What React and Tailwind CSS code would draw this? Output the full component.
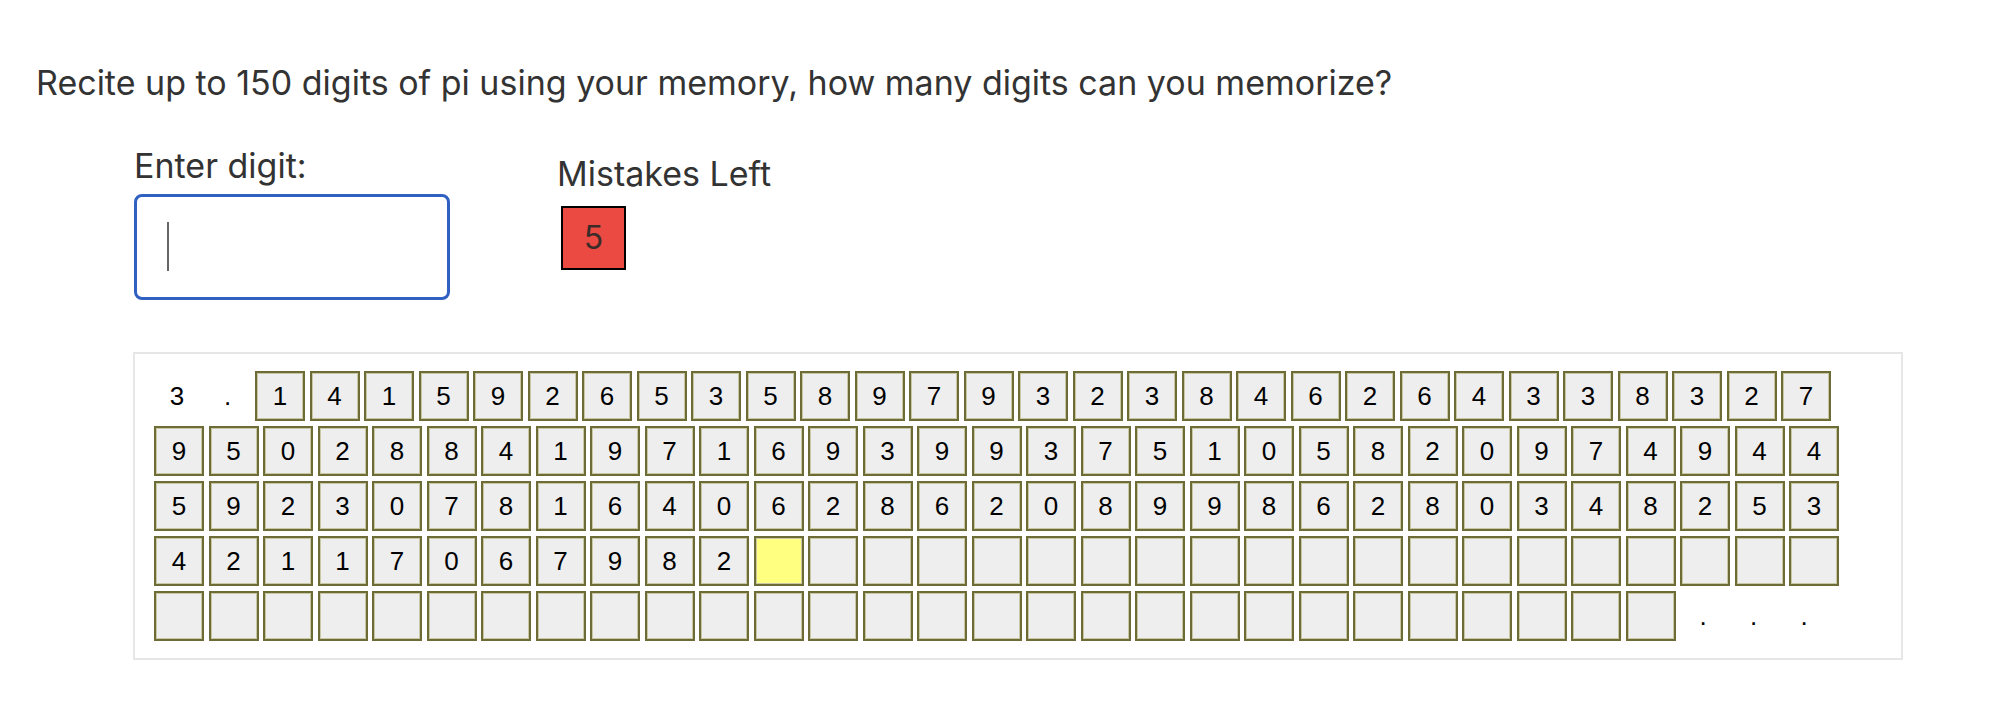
import React from 'react';

const PI =
  '141592653589793238462643383279502884197169399375105820974944592307816406286208998628034825342117067982';

function buildRows() {
  const filled = PI.split('');
  const cells = [];
  cells.push({ kind: 'plain', text: '3' });
  cells.push({ kind: 'plain', text: '.' });
  for (let i = 0; i < 150; i++) {
    if (i < filled.length) cells.push({ kind: 'digit', text: filled[i] });
    else if (i === filled.length) cells.push({ kind: 'current', text: '' });
    else cells.push({ kind: 'empty', text: '' });
  }
  cells.push({ kind: 'plain', text: '.' });
  cells.push({ kind: 'plain', text: '.' });
  cells.push({ kind: 'plain', text: '.' });

  const rows = [];
  for (let i = 0; i < cells.length; i += 31) rows.push(cells.slice(i, i + 31));
  return rows;
}

function Cell({ cell }) {
  if (cell.kind === 'plain') {
    return (
      <div className="flex h-[50px] w-[46px] items-center justify-center text-[26px] text-black">
        {cell.text}
      </div>
    );
  }
  const bg = cell.kind === 'current' ? 'bg-[#ffff80]' : 'bg-[#eeeeee]';
  return (
    <div
      className={`flex h-[50px] w-[50px] items-center justify-center border-2 border-[#6e6c36] text-[26px] text-black shadow-[inset_0_0_0_1px_#c9c8a4] ${bg}`}
    >
      {cell.text}
    </div>
  );
}

export default function App() {
  const rows = buildRows();

  return (
    <div className="min-h-screen bg-white font-['Inter','Liberation_Sans',Arial,sans-serif] text-[#333333]">
      <h1 className="pl-[36px] pt-[63px] text-[34px] font-normal leading-[40px]">
        Recite up to 150 digits of pi using your memory, how many digits can you memorize?
      </h1>

      <div className="mt-[43px] flex gap-[107px] pl-[134px]">
        <div className="flex flex-col">
          <label className="text-[34px] leading-[40px]">Enter digit:</label>
          <div className="relative mt-[8px]">
            <input
              autoFocus
              type="text"
              className="h-[106px] w-[316px] rounded-[8px] border-[3px] border-[#2f60c2] px-[30px] text-[40px] text-[#333333] caret-[#555555] outline-none"
            />
            <span className="pointer-events-none absolute left-[33px] top-[28px] h-[49px] w-[1.5px] bg-[#666666]" />
          </div>
        </div>
        <div className="flex flex-col pt-[8px]">
          <span className="text-[34px] leading-[40px]">Mistakes Left</span>
          <div className="ml-[4px] mt-[12px] flex h-[64px] w-[65px] items-center justify-center border-2 border-black bg-[#ea4a41] text-[32px] text-[#3b2c2a]">
            5
          </div>
        </div>
      </div>

      <div className="ml-[133px] mt-[52px] w-[1770px] border-2 border-[#e6e6e6] px-[19px] py-[17px] font-['Liberation_Sans',Arial,sans-serif]">
        <div className="flex flex-col gap-y-[5px]">
          {rows.map((row, r) => (
            <div key={r} className="flex gap-x-[4.5px]">
              {row.map((cell, c) => (
                <Cell key={c} cell={cell} />
              ))}
            </div>
          ))}
        </div>
      </div>
    </div>
  );
}
